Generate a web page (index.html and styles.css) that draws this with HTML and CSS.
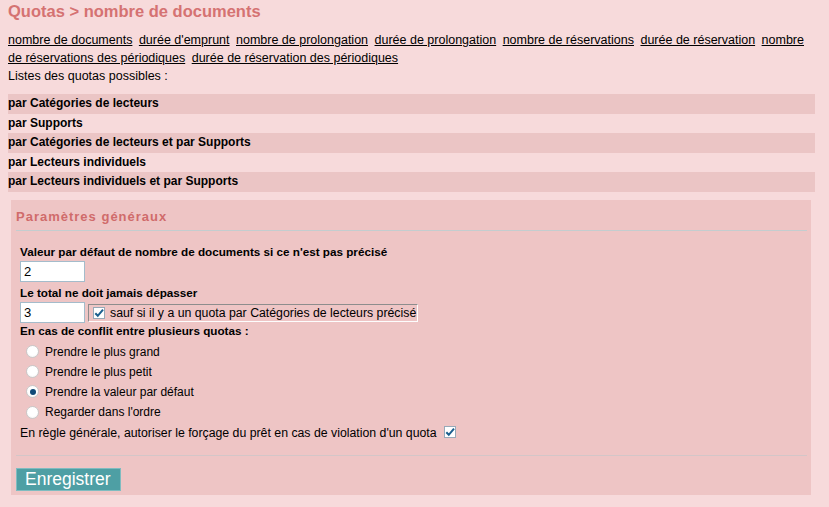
FILE: index.html
```html
<!DOCTYPE html>
<html lang="fr">
<head>
<meta charset="utf-8">
<title>Quotas</title>
<link rel="stylesheet" href="styles.css">
</head>
<body>
<div class="page">
  <h1 class="title">Quotas &gt; nombre de documents</h1>
  <nav class="tabs">
    <a href="#">nombre de documents</a> <a href="#">durée d'emprunt</a> <a href="#">nombre de prolongation</a> <a href="#">durée de prolongation</a> <a href="#">nombre de réservations</a> <a href="#">durée de réservation</a> <a href="#">nombre de réservations des périodiques</a> <a href="#">durée de réservation des périodiques</a>
  </nav>
  <div class="intro">Listes des quotas possibles :</div>
  <ul class="quota-list">
    <li class="dark">par Catégories de lecteurs</li>
    <li>par Supports</li>
    <li class="dark">par Catégories de lecteurs et par Supports</li>
    <li>par Lecteurs individuels</li>
    <li class="dark">par Lecteurs individuels et par Supports</li>
  </ul>
  <form class="box">
    <h3 class="box-title">Paramètres généraux</h3>
    <div class="box-body">
      <div class="label">Valeur par défaut de nombre de documents si ce n'est pas précisé</div>
      <div class="field-row"><span class="input">2</span></div>
      <div class="label">Le total ne doit jamais dépasser</div>
      <div class="field-row last">
        <span class="input">3</span>
        <span class="check-label"><span class="check"><svg viewBox="0 0 12 12" width="12" height="12"><path d="M2.3 6.2 L4.8 8.8 L10 2.6" fill="none" stroke="#1b5f8e" stroke-width="2"/></svg></span>sauf si il y a un quota par Catégories de lecteurs précisé</span>
      </div>
      <div class="label">En cas de conflit entre plusieurs quotas :</div>
      <div class="radios">
        <div class="radio-row"><span class="radio"></span>Prendre le plus grand</div>
        <div class="radio-row"><span class="radio"></span>Prendre le plus petit</div>
        <div class="radio-row"><span class="radio on"></span>Prendre la valeur par défaut</div>
        <div class="radio-row"><span class="radio"></span>Regarder dans l'ordre</div>
      </div>
      <div class="force-row">En règle générale, autoriser le forçage du prêt en cas de violation d'un quota <span class="check force-check"><svg viewBox="0 0 12 12" width="12" height="12"><path d="M2.3 6.2 L4.8 8.8 L10 2.6" fill="none" stroke="#1b5f8e" stroke-width="2"/></svg></span></div>
    </div>
    <div class="box-footer">
      <span class="btn">Enregistrer</span>
    </div>
  </form>
</div>
</body>
</html>
```

FILE: styles.css
```css
html, body {
  margin: 0;
  padding: 0;
  background: #f7dadb;
}
body {
  font-family: "Liberation Sans", Arial, sans-serif;
  font-size: 12px;
  color: #000;
}
.page {
  width: 807px;
  margin-left: 8px;
}
.title {
  margin: 0;
  font-size: 16.5px;
  line-height: 22px;
  font-weight: bold;
  color: #d57272;
}
.tabs {
  margin-top: 9px;
  font-size: 12.5px;
  line-height: 18px;
}
.tabs a {
  color: #000;
  text-decoration: underline;
  margin-right: 3px;
}
.intro {
  font-size: 12.5px;
  line-height: 18px;
}
.quota-list {
  list-style: none;
  margin: 9px 0 0 0;
  padding: 0;
}
.quota-list li {
  font-weight: bold;
  height: 19.5px;
  line-height: 19.5px;
}
.quota-list li.dark {
  background: #ebc5c5;
}
.box {
  display: block;
  margin: 8.5px 0 0 3px;
  width: 800px;
  height: 295px;
  box-sizing: border-box;
  background: #eec5c5;
  padding: 7px 4px 0 5px;
}
.box-title {
  margin: 0;
  font-size: 13px;
  letter-spacing: 1px;
  line-height: 20px;
  padding-bottom: 3px;
  border-bottom: 1px solid #c3cdcf;
  color: #d06b6b;
}
.box-body {
  padding: 13px 0 0 4px;
}
.label {
  font-weight: bold;
  font-size: 11.7px;
  line-height: 16px;
}
.field-row {
  display: flex;
  align-items: center;
  gap: 3px;
  margin: 1px 0 3px 0;
}
.field-row.last {
  margin-bottom: 0;
}
.input {
  box-sizing: border-box;
  width: 65px;
  height: 21px;
  background: #fff;
  border: 1px solid #a4bccb;
  font-size: 13px;
  line-height: 19px;
  padding-left: 3px;
}
.check-label {
  display: inline-flex;
  align-items: center;
  gap: 5px;
  height: 18px;
  box-sizing: border-box;
  padding: 0 1px 0 4px;
  border: 1px solid;
  border-color: #8d8d8d #fdfdfd #fdfdfd #8d8d8d;
  font-size: 12.3px;
}
.check {
  display: inline-flex;
  box-sizing: border-box;
  width: 12px;
  height: 12px;
  background: #fff;
  border: 1px solid #97a9b8;
  align-items: center;
  justify-content: center;
  vertical-align: -1px;
}
.check svg {
  display: block;
  flex: none;
}
.force-check {
  margin-left: 4px;
}
.radios {
  padding-top: 2.5px;
}
.radio-row {
  display: flex;
  align-items: center;
  height: 20.2px;
  padding-left: 6px;
}
.radio {
  box-sizing: border-box;
  width: 13px;
  height: 13px;
  border-radius: 50%;
  border: 1px solid #c9c9c9;
  background: radial-gradient(circle at 50% 40%, #ffffff 55%, #e9e9e9 100%);
  margin-right: 6px;
  position: relative;
}
.radio.on::after {
  content: "";
  position: absolute;
  left: 2.5px;
  top: 2.5px;
  width: 6px;
  height: 6px;
  border-radius: 50%;
  background: #0f4a78;
}
.force-row {
  height: 20px;
  line-height: 20px;
  margin-top: 1px;
  font-size: 12.3px;
}
.box-footer {
  margin-top: 12px;
  border-top: 1px solid #d3c6c8;
  padding-top: 12px;
}
.btn {
  display: inline-block;
  width: 105px;
  height: 23px;
  box-sizing: border-box;
  background: #4e9fa4;
  border: 1px solid #7fbcc0;
  color: #fff;
  font-size: 17.5px;
  line-height: 21px;
  padding-left: 8px;
}
```
